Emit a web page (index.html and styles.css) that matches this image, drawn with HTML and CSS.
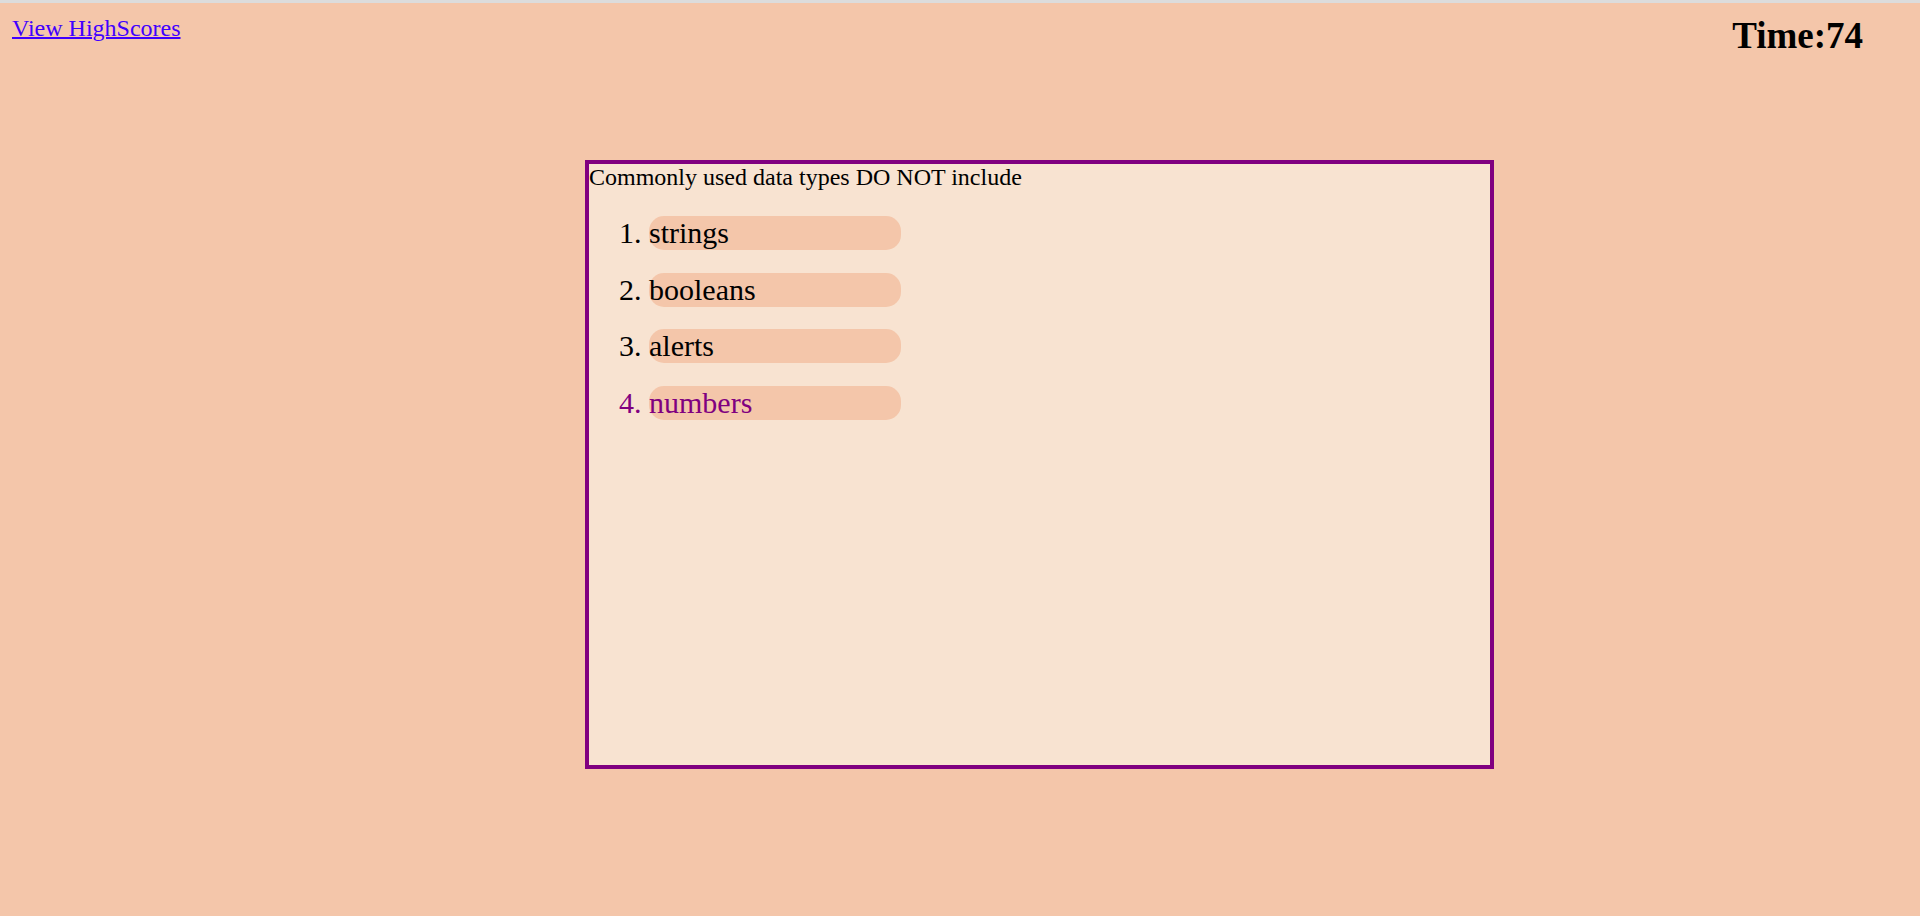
FILE: index.html
```html
<!DOCTYPE html>
<html lang="en">
<head>
<meta charset="utf-8">
<title>Quiz</title>
<link rel="stylesheet" href="styles.css">
</head>
<body>
<div class="topbar"></div>
<div class="page">
  <header class="header">
    <a class="scores-link" href="#">View HighScores</a>
    <div class="timer">Time:74</div>
  </header>
  <main class="quiz">
    <p class="question">Commonly used data types DO NOT include</p>
    <ol class="answers">
      <li class="answer">strings</li>
      <li class="answer">booleans</li>
      <li class="answer">alerts</li>
      <li class="answer answer-active">numbers</li>
    </ol>
  </main>
</div>
</body>
</html>
```

FILE: styles.css
```css
html, body {
  margin: 0;
  padding: 0;
  background: #f4c6aa;
  font-family: "Liberation Serif", "Times New Roman", serif;
  color: #000;
}

.topbar {
  height: 3px;
  background: #dcdcdc;
}

.page {
  padding: 0 12px;
}

.header {
  display: flex;
  justify-content: space-between;
  align-items: flex-start;
  height: 60px;
}

.scores-link {
  margin-top: 12px;
  font-size: 24px;
  line-height: normal;
  color: #4000ff;
  text-decoration: underline;
  text-decoration-thickness: 2px;
}

.timer {
  margin-top: 11px;
  margin-right: 45px;
  font-size: 37px;
  font-weight: bold;
  line-height: normal;
}

.quiz {
  box-sizing: border-box;
  width: 909px;
  height: 609px;
  margin: 97px 0 0 573px;
  border: 4px solid #800080;
  background: #f8e3d1;
}

.question {
  margin: 0;
  font-size: 24px;
  line-height: normal;
}

.answers {
  margin: 25px 0 0;
  padding-left: 60px;
  font-size: 30px;
}

.answer {
  width: 252px;
  height: 34px;
  line-height: 34px;
  margin-bottom: 22.5px;
  border-radius: 15px;
  background: #f4c6aa;
}

.answer-active {
  color: #800080;
}
```
